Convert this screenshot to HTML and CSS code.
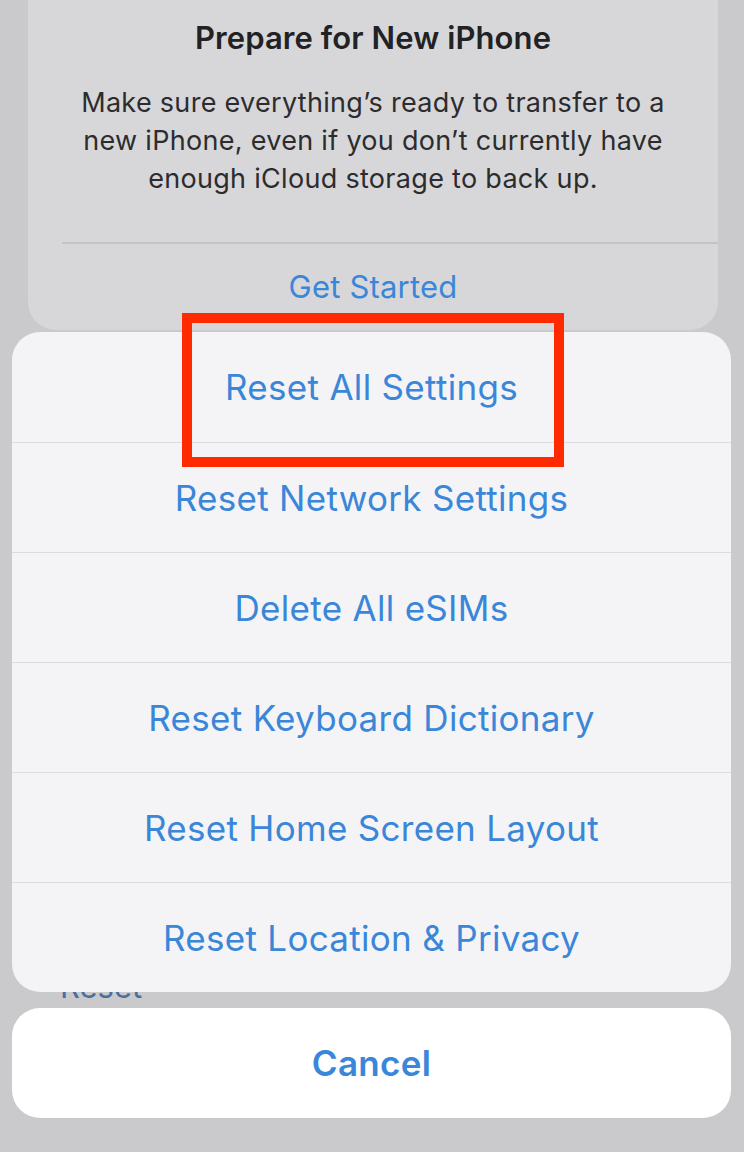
FILE: index.html
```html
<!DOCTYPE html>
<html lang="en">
<head>
    <meta charset="UTF-8">
    <meta name="viewport" content="width=device-width, initial-scale=1.0">
    <title>Transfer or Reset iPhone</title>
    <link rel="stylesheet" href="styles.css">
</head>
<body>
    <div class="screen">
        <div class="prepare-card">
            <h2>Prepare for New iPhone</h2>
            <p>Make sure everything’s ready to transfer to a new iPhone, even if you don’t currently have enough iCloud storage to back up.</p>
            <div class="card-action">Get Started</div>
        </div>

        <div class="reset-row">Reset</div>

        <div class="sheet-wrap">
            <div class="action-sheet">
                <div class="sheet-item">Reset All Settings</div>
                <div class="sheet-item">Reset Network Settings</div>
                <div class="sheet-item">Delete All eSIMs</div>
                <div class="sheet-item">Reset Keyboard Dictionary</div>
                <div class="sheet-item">Reset Home Screen Layout</div>
                <div class="sheet-item">Reset Location &amp; Privacy</div>
            </div>
            <div class="cancel-btn">Cancel</div>
        </div>

        <div class="highlight"></div>
    </div>
</body>
</html>
```

FILE: styles.css
```css
body {
    margin: 0;
    padding: 0;
    background-color: #cacacd;
    font-family: Inter, "Noto Sans", sans-serif;
}
.screen {
    position: relative;
    width: 744px;
    height: 1152px;
    overflow: hidden;
}
.prepare-card {
    margin: -30px 26px 0 28px;
    padding-top: 50px;
    height: 360px;
    box-sizing: border-box;
    background-color: #d7d7da;
    border-radius: 0 0 28px 28px;
    text-align: center;
}
.prepare-card h2 {
    margin: 0;
    font-size: 31px;
    font-weight: 600;
    line-height: 36px;
    letter-spacing: 0.1px;
    color: #222224;
}
.prepare-card p {
    margin: 28px 24px 0;
    font-size: 27px;
    line-height: 38px;
    letter-spacing: 0.3px;
    color: #2c2c2e;
}
.card-action {
    margin: 44px 0 0 34px;
    border-top: 2px solid #c4c4c8;
    padding-top: 25px;
    padding-right: 34px;
    font-size: 31px;
    line-height: 36px;
    letter-spacing: 0.2px;
    color: #3a86d8;
}
.reset-row {
    margin: 637px 0 0 60px;
    font-size: 31px;
    line-height: 40px;
    color: #4a6f9c;
}
.sheet-wrap {
    position: absolute;
    left: 12px;
    top: 332px;
    width: 719px;
    display: flex;
    flex-direction: column;
    gap: 16px;
}
.action-sheet {
    background-color: #f4f4f6;
    border-radius: 28px;
    overflow: hidden;
}
.sheet-item {
    height: 110px;
    display: flex;
    align-items: center;
    justify-content: center;
    font-size: 35px;
    letter-spacing: 0.3px;
    color: #3a86d8;
    border-top: 1px solid #dcdce0;
    box-sizing: border-box;
}
.sheet-item:first-child {
    border-top: none;
}
.cancel-btn {
    height: 110px;
    display: flex;
    align-items: center;
    justify-content: center;
    background-color: #ffffff;
    border-radius: 28px;
    font-size: 35px;
    font-weight: 600;
    letter-spacing: 0.3px;
    color: #3a86d8;
}
.highlight {
    position: absolute;
    left: 182px;
    top: 313px;
    width: 382px;
    height: 154px;
    box-sizing: border-box;
    border: 10px solid #ff2a00;
}
```
